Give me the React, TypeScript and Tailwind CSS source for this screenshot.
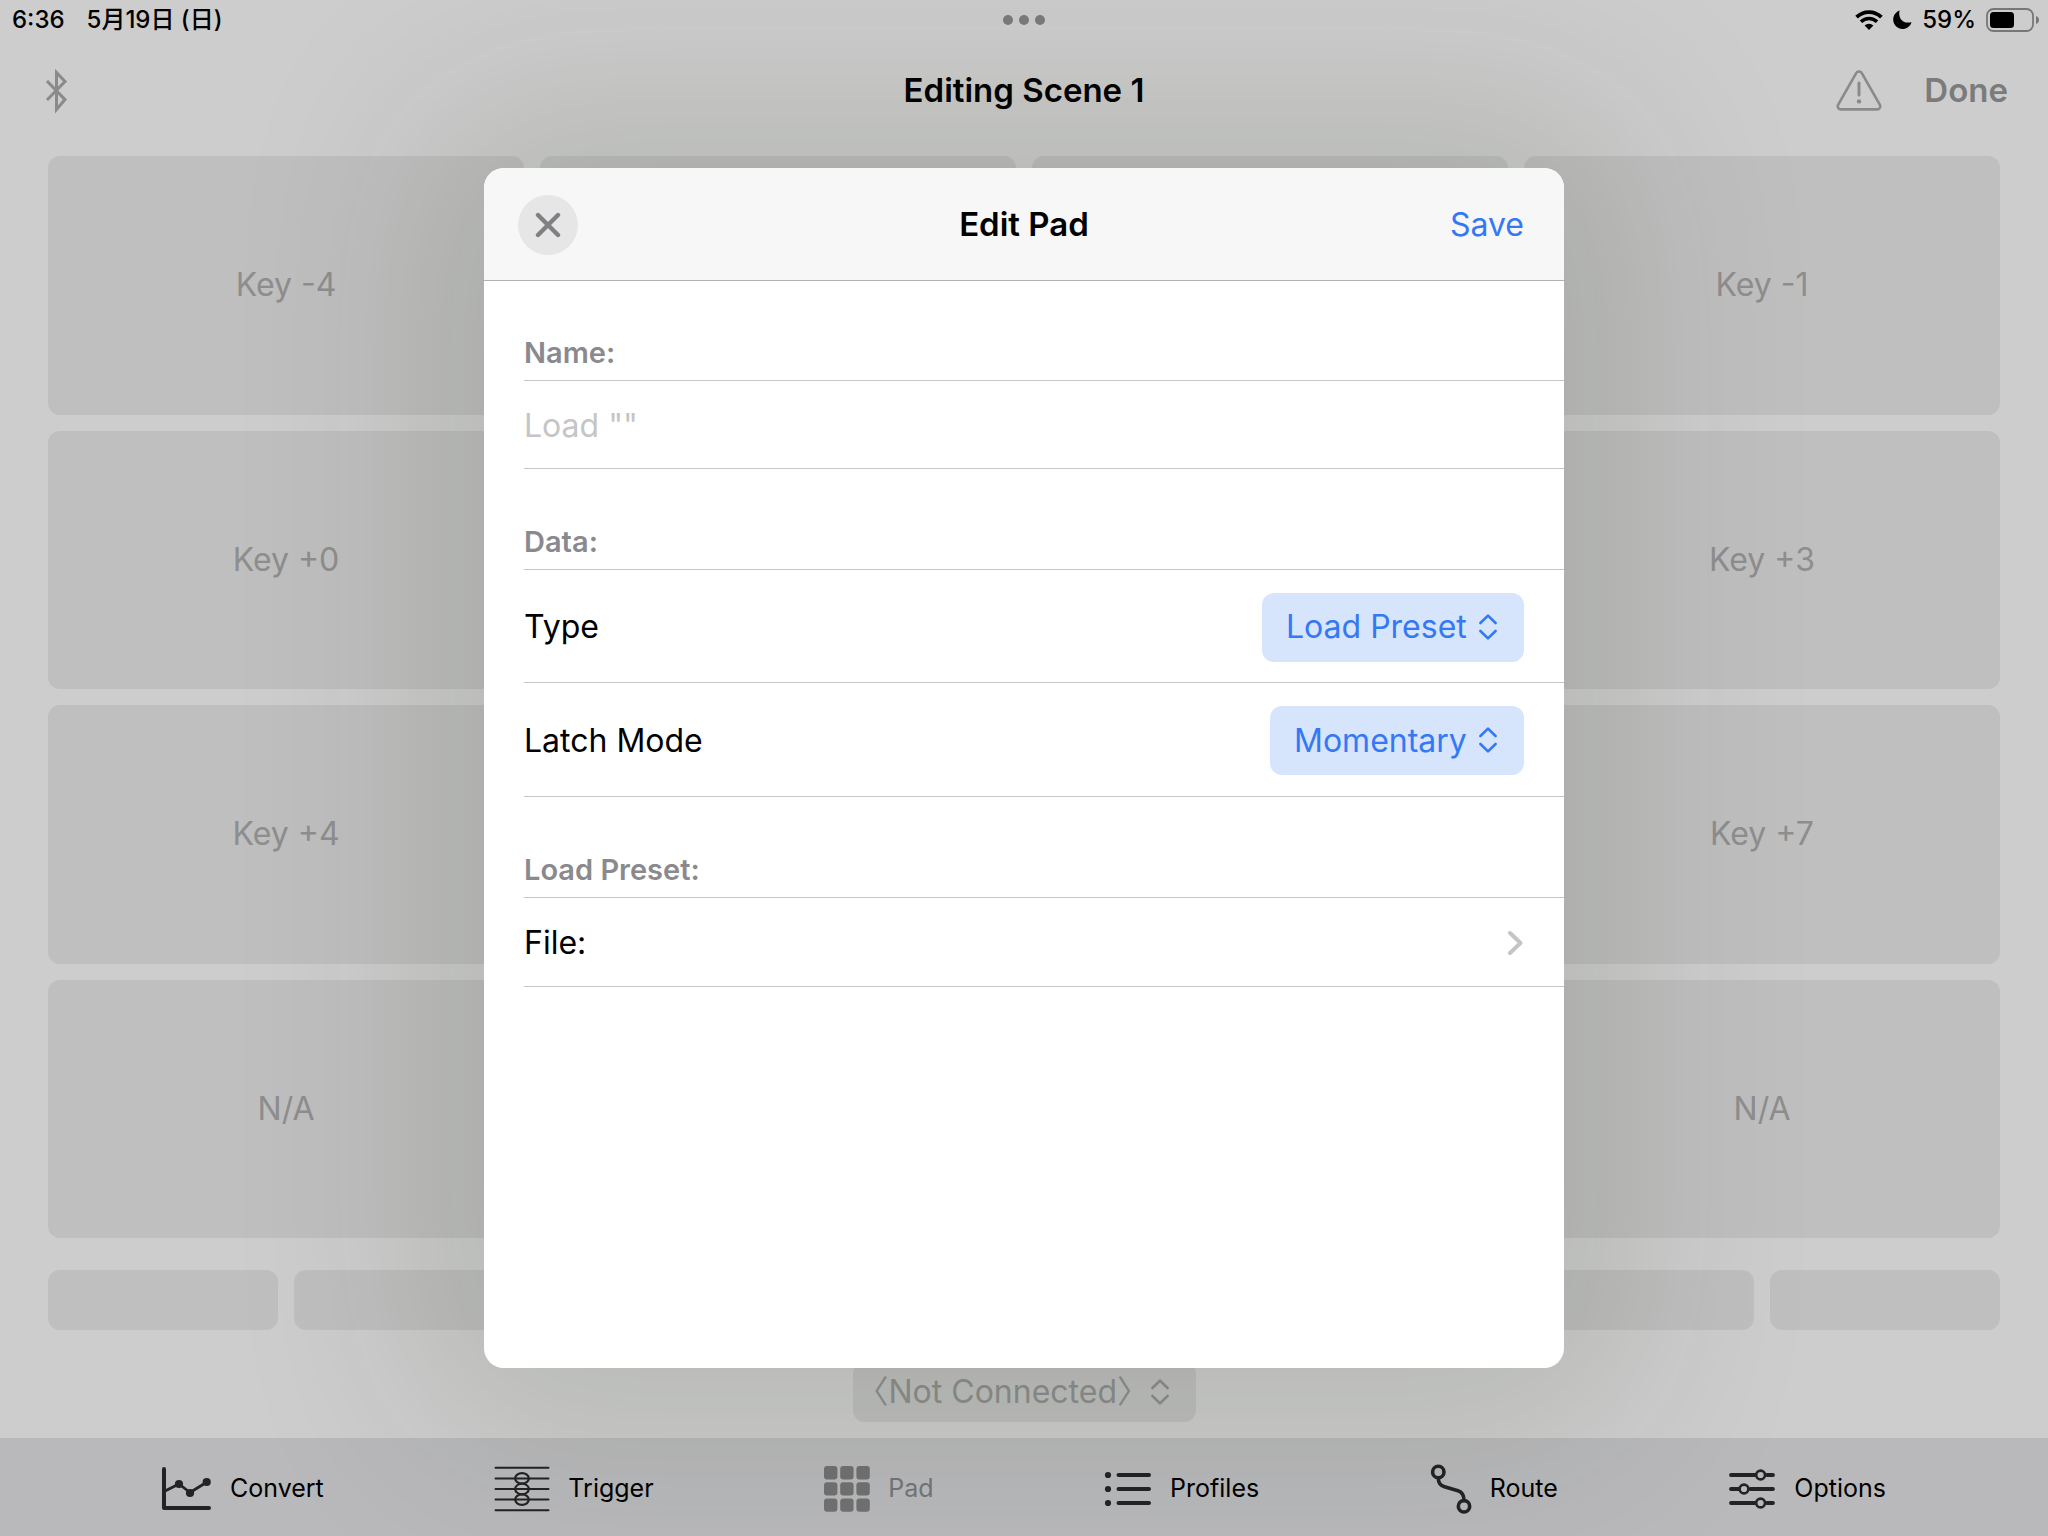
import React from "react";

type Pad = string | null;

const pads: Pad[] = [
  "Key -4", null, null, "Key -1",
  "Key +0", null, null, "Key +3",
  "Key +4", null, null, "Key +7",
  "N/A", null, null, "N/A",
];

function StatusBar() {
  return (
    <div className="grid h-10 grid-cols-3 items-center px-3 text-2xl font-medium text-black">
      <div className="flex gap-[22px]">
        <span>6:36</span>
        <span>5月19日 (日)</span>
      </div>
      <div className="flex justify-center gap-1.5">
        <span className="size-2.5 rounded-full bg-[#7b7b7b]" />
        <span className="size-2.5 rounded-full bg-[#7b7b7b]" />
        <span className="size-2.5 rounded-full bg-[#7b7b7b]" />
      </div>
      <div className="flex items-center justify-end gap-2.5">
        <svg width="28" height="20" viewBox="0 0 28 20" fill="none" stroke="#000">
          <path d="M1.6 7.2A17.6 17.6 0 0 1 26.4 7.2" strokeWidth="3.8" />
          <path d="M6 11.8A11.4 11.4 0 0 1 22 11.8" strokeWidth="3.6" />
          <path d="M14 20L9.6 15.6A6.2 6.2 0 0 1 18.4 15.6Z" fill="#000" stroke="none" />
        </svg>
        <svg width="19" height="20" viewBox="0 0 19 20" fill="#000">
          <path d="M6.6 0.4C5 6.6 8.4 14.4 18.6 12.2C17 16.6 13.6 19 9.6 19C4.4 19 0.2 15 0.2 9.6C0.2 5.4 2.8 1.8 6.6 0.4Z" />
        </svg>
        <span>59%</span>
        <svg width="50" height="24" viewBox="0 0 50 24" className="overflow-visible">
          <rect x="1" y="1" width="46" height="22" rx="6.5" fill="none" stroke="#777" strokeWidth="1.8" />
          <rect x="4" y="4" width="24" height="16" rx="3.5" fill="#000" />
          <path d="M50 8C52.4 8.8 53 10.4 53 12C53 13.6 52.4 15.2 50 16Z" fill="#777" />
        </svg>
      </div>
    </div>
  );
}

function NavBar() {
  return (
    <header className="grid h-[100px] grid-cols-3 items-center px-10 pt-0.5">
      <button aria-label="Bluetooth" className="ml-1 w-fit">
        <svg width="24" height="48" viewBox="0 0 24 48" fill="none" stroke="#8a8a8a" strokeWidth="3">
          <path d="M3 14L21 32.6L12.5 42.5V5.5L21 14.6L3 33" />
        </svg>
      </button>
      <h1 className="text-center text-[33px] font-semibold text-black">Editing Scene 1</h1>
      <div className="flex items-center justify-end gap-[42px]">
        <button aria-label="Warnings">
          <svg width="46" height="44" viewBox="0 0 46 44" fill="none" stroke="#8a8a8a" strokeWidth="2.6" strokeLinecap="round" strokeLinejoin="round">
            <path d="M20.2 4.2C21.4 1.9 24.6 1.9 25.8 4.2L43.8 35.6C45 37.8 43.6 40.4 41 40.4H5C2.4 40.4 1 37.8 2.2 35.6Z" />
            <path d="M23 14V26" strokeWidth="3" />
            <circle cx="23" cy="32.4" r="2.2" fill="#8a8a8a" stroke="none" />
          </svg>
        </button>
        <button className="text-[33px] font-semibold text-[#7b7b7b]">Done</button>
      </div>
    </header>
  );
}

function UpDown({ className }: { className: string }) {
  return (
    <svg className={className} width="20" height="28" viewBox="0 0 20 28" fill="none" stroke="currentColor" strokeWidth="2.6" strokeLinecap="round" strokeLinejoin="round">
      <path d="M2.4 10L10 2.6L17.6 10" />
      <path d="M2.4 18L10 25.4L17.6 18" />
    </svg>
  );
}

function PopUp({ id, value }: { id: string; value: string }) {
  return (
    <div className="relative text-[#3478f6]">
      <select id={id} className="h-[69px] appearance-none rounded-xl bg-[#d6e5fc] pl-6 pr-[57px] text-[32px]">
        <option>{value}</option>
      </select>
      <UpDown className="pointer-events-none absolute right-6.5 top-5" />
    </div>
  );
}

function SectionTitle({ children, htmlFor }: { children: React.ReactNode; htmlFor?: string }) {
  const cls = "ml-10 flex h-[101px] items-end border-b border-[#c6c6c8] pb-[9px] text-[29px] leading-9 font-semibold text-[#8a8a8e]";
  return htmlFor ? <label htmlFor={htmlFor} className={cls}>{children}</label> : <h3 className={cls}>{children}</h3>;
}

function EditDialog() {
  return (
    <div role="dialog" aria-label="Edit Pad" className="min-h-[1200px] w-full max-w-[1080px] overflow-hidden rounded-[20px] bg-white">
      <div className="grid h-[113px] grid-cols-3 items-center border-b border-[#b2b2b2] bg-[#f7f7f7] px-10 pt-0.5">
        <button aria-label="Close" className="-ml-1.5 flex size-15 items-center justify-center rounded-full bg-[#e6e6e7]">
          <svg width="26" height="26" viewBox="0 0 26 26" fill="none" stroke="#808084" strokeWidth="4.4" strokeLinecap="round">
            <path d="M3 3L23 23M23 3L3 23" />
          </svg>
        </button>
        <h2 className="text-center text-[33px] font-semibold text-black">Edit Pad</h2>
        <button className="justify-self-end text-[32px] text-[#3478f6]">Save</button>
      </div>

      <div className="-mt-px">
        <SectionTitle htmlFor="pad-name">Name:</SectionTitle>
        <div className="ml-10 flex h-[88px] border-b border-[#c6c6c8] pt-0.5">
          <input id="pad-name" placeholder={'Load ""'} className="w-full text-[32px] outline-none placeholder:text-[#c5c5c7]" />
        </div>

        <SectionTitle>Data:</SectionTitle>
        <div className="ml-10 flex h-[113px] items-center justify-between border-b border-[#c6c6c8] pr-10 pt-0.5">
          <label htmlFor="type">Type</label>
          <PopUp id="type" value="Load Preset" />
        </div>
        <div className="ml-10 flex h-[114px] items-center justify-between border-b border-[#c6c6c8] pr-10 pt-0.5">
          <label htmlFor="latch">Latch Mode</label>
          <PopUp id="latch" value="Momentary" />
        </div>

        <SectionTitle>Load Preset:</SectionTitle>
        <button className="ml-10 flex h-[89px] w-[calc(100%-40px)] items-center justify-between border-b border-[#c6c6c8] pr-10 pt-0.5">
          <span>File:</span>
          <svg width="18" height="28" viewBox="0 0 18 28" fill="none" stroke="#c4c4c6" strokeWidth="4" strokeLinecap="round" strokeLinejoin="round">
            <path d="M4 4L14.5 14L4 24" />
          </svg>
        </button>
      </div>
    </div>
  );
}

const dark = "#232323";

const ConvertIcon = (
  <svg width="50" height="46" viewBox="14 26 50 46" fill="none" stroke={dark} strokeWidth="4" strokeLinecap="round" strokeLinejoin="round">
    <path d="M16 29V68H61" />
    <path d="M17 51L31 44L42 52.5L59 42" strokeWidth="2.8" />
    <g fill={dark} stroke="none">
      <circle cx="31" cy="44" r="4.1" />
      <circle cx="42" cy="53" r="4.1" />
      <circle cx="58.7" cy="42" r="4.1" />
    </g>
  </svg>
);

const TriggerIcon = (
  <svg width="56" height="46" viewBox="340 25 56 46" fill="none" stroke={dark} strokeWidth="2" strokeLinecap="round">
    <path d="M341.5 26.7H394.5M341.5 37.4H394.5M341.5 48H394.5M341.5 58.6H394.5M341.5 69.2H394.5" />
    <ellipse cx="368" cy="37.4" rx="6.8" ry="5.3" strokeWidth="2.2" />
    <ellipse cx="368" cy="48" rx="6.8" ry="5.3" strokeWidth="2.2" />
    <ellipse cx="368" cy="58.6" rx="6.8" ry="5.3" strokeWidth="2.2" />
  </svg>
);

const PadIcon = (
  <svg width="46" height="46" viewBox="0 0 46 46" fill="#717171">
    {[0, 16.2, 32.4].map((y) =>
      [0, 16.2, 32.4].map((x) => <rect key={`${x}-${y}`} x={x} y={y} width="13.4" height="13.4" rx="3" />),
    )}
  </svg>
);

const ProfilesIcon = (
  <svg width="48" height="36" viewBox="0 0 48 36" fill="none" stroke={dark} strokeWidth="4" strokeLinecap="round">
    <path d="M14.5 4H45M14.5 18H45M14.5 32H45" />
    <g fill={dark} stroke="none">
      <circle cx="4" cy="4" r="3.1" />
      <circle cx="4" cy="18" r="3.1" />
      <circle cx="4" cy="32" r="3.1" />
    </g>
  </svg>
);

const RouteIcon = (
  <svg width="42" height="50" viewBox="27 23 42 50" fill="none" stroke={dark} strokeWidth="3.6">
    <circle cx="35.3" cy="31" r="5.7" />
    <circle cx="61" cy="65.3" r="5.7" />
    <path d="M35.3 37C35.3 42 37.5 44.6 41.5 45.8L55 49.8C59.4 51.2 61 54 61 59.5" />
  </svg>
);

const OptionsIcon = (
  <svg width="48" height="40" viewBox="326 28 48 40" fill="none" stroke={dark} strokeWidth="3.8" strokeLinecap="round">
    <path d="M329 34H353M365 34H371M329 48H336.5M348.5 48H371M329 62H353M365 62H371" />
    <g strokeWidth="2.6">
      <circle cx="358.6" cy="34" r="4.4" />
      <circle cx="342" cy="48" r="4.4" />
      <circle cx="358.6" cy="62" r="4.4" />
    </g>
  </svg>
);

const tabs = [
  { label: "Convert", icon: ConvertIcon },
  { label: "Trigger", icon: TriggerIcon },
  { label: "Pad", icon: PadIcon, active: true },
  { label: "Profiles", icon: ProfilesIcon },
  { label: "Route", icon: RouteIcon },
  { label: "Options", icon: OptionsIcon },
];

export default function App() {
  return (
    <div className="relative flex min-h-screen flex-col overflow-hidden bg-[#cdcdcd] font-['Inter','Noto_Sans_CJK_JP',sans-serif] text-[32px] text-black">
      <StatusBar />
      <NavBar />

      <main className="flex flex-1 flex-col gap-8 px-12 py-4 text-[#8e8e8e]">
        <div className="grid flex-1 grid-cols-4 grid-rows-4 gap-4">
          {pads.map((label, i) => (
            <button key={i} className="rounded-xl bg-[#bfbfbf]">{label}</button>
          ))}
        </div>
        <div className="grid grid-cols-8 gap-4">
          {Array.from({ length: 8 }, (_, i) => (
            <button key={i} className="h-15 rounded-xl bg-[#bfbfbf]" />
          ))}
        </div>
        <div className="relative self-center">
          <select aria-label="Connection" className="h-15 appearance-none rounded-xl bg-[#bfbfbf] pl-5 pr-[62px] text-[32px] [font-feature-settings:'halt']">
            <option>〈Not Connected〉</option>
          </select>
          <UpDown className="pointer-events-none absolute right-6.5 top-4" />
        </div>
      </main>

      <nav className="flex h-[98px] items-center justify-between bg-[#b9b9bb] px-[162px] pt-1 text-[25px]">
        {tabs.map(({ label, icon, active }) => (
          <button key={label} className={active ? "flex items-center gap-[18px] text-[#757577]" : "flex items-center gap-[18px] text-black"}>
            {icon}
            {label}
          </button>
        ))}
      </nav>

      <div className="absolute inset-0 flex items-center justify-center">
        <div className="w-full max-w-[1080px] rounded-[20px] shadow-[0_0_200px_60px_rgba(20,38,8,0.125)]">
          <EditDialog />
        </div>
      </div>
    </div>
  );
}
